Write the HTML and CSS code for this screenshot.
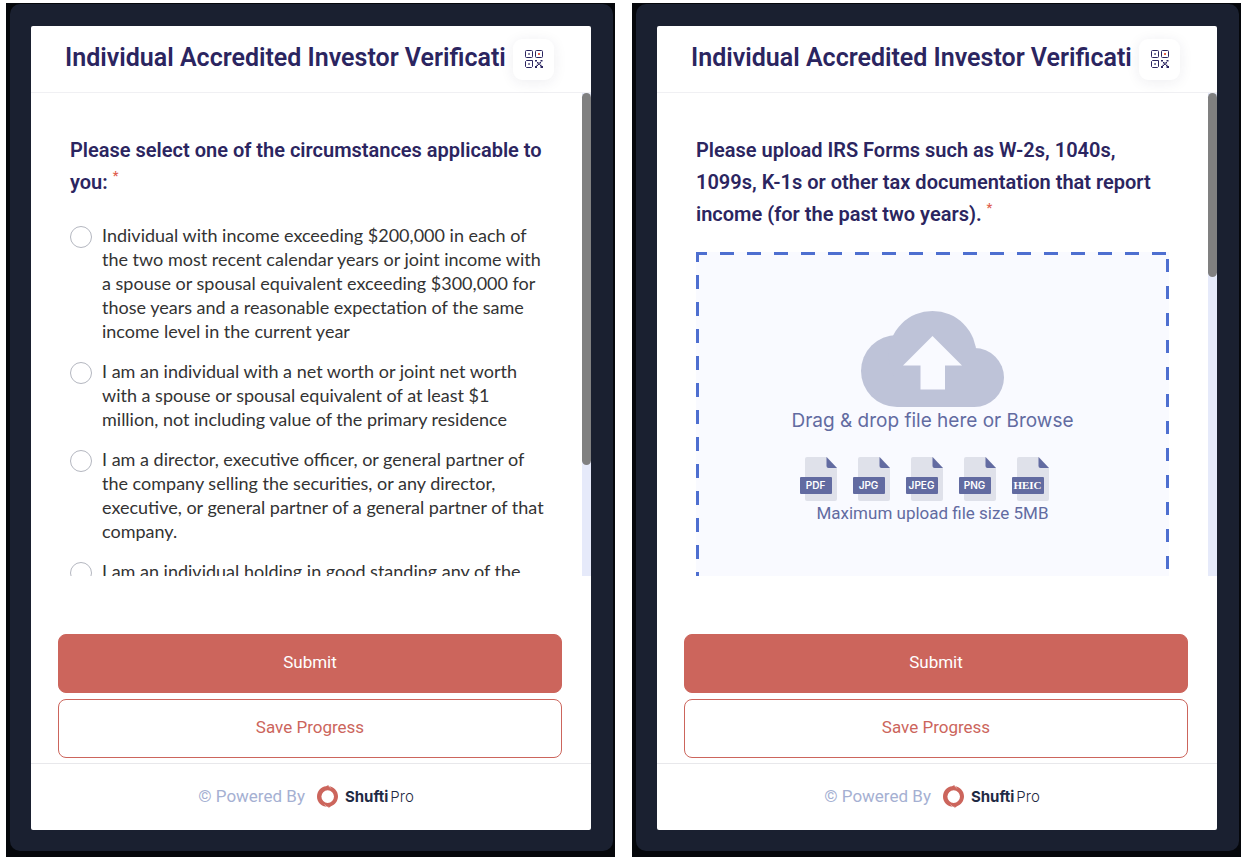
FILE: index.html
```html
<!DOCTYPE html>
<html lang="en">
<head>
<meta charset="utf-8">
<title>Individual Accredited Investor Verification</title>
<link rel="stylesheet" href="styles.css">
</head>
<body>
<svg class="defs" aria-hidden="true">
  <symbol id="qr" viewBox="0 0 18 18">
    <g fill="none" stroke="#2b2560" stroke-width="1">
      <rect x=".5" y=".5" width="7" height="7" rx="1"/>
      <rect x="10.5" y=".5" width="7" height="7" rx="1"/>
      <path d="M1.500 10.500H7.500V16.500L6.500 17.500H1.500L.5 16.500V11.500Z"/>
    </g>
    <path fill="#2b2560" d="M3.300 3.300h1.500v1.500h-1.500zM3.300 13.200h1.500v1.500h-1.500zM10 10h2v1.500h-2zM15.500 10h2v1.500h-2zM12 12h1.500v1.500H12zM14.500 12H16v1.500h-1.500zM13 13.500h1.800v1.500H13zM10 16h2v2h-2zM11.500 14.700H13v1.300h-1.500zM15.500 16h2.500v2h-2.500zM15 14.700h1.500V16H15z"/>
    <path fill="#e0604f" d="M13 3h2v2h-2z"/>
  </symbol>
  <symbol id="ring" viewBox="0 0 21 23">
    <path fill="#cc655c" fill-rule="evenodd" d="M11.500 0V1.200C17 1.500 21 6 21 11.300C21 16 18 20 14 21.200L11.500 23V21.800C5 22.500 0 17.500 0 11.800C0 6 4 1.500 9 1.200ZM10.700 5.300A6.300 6.300 0 1 0 10.700 17.900A6.300 6.300 0 1 0 10.700 5.300Z"/>
    <path fill="none" stroke="#fff" stroke-width=".4" d="M12 1L14 3.500M10 22L7.500 19.500"/>
  </symbol>
  <symbol id="file" viewBox="0 0 37 44">
    <path fill="#dfe1ea" d="M7 0H27L37 11V42a2 2 0 0 1-2 2H7a2 2 0 0 1-2-2V2a2 2 0 0 1 2-2Z"/>
    <path fill="#626ba1" d="M26.500 0L37 11H28.500a2 2 0 0 1-2-2Z"/>
  </symbol>
</svg>
<main class="stage">
  <section class="device">
    <div class="bezel">
      <form class="screen">
        <header class="top">
          <h1 class="title">Individual Accredited Investor Verification</h1>
          <button class="qr" type="button" aria-label="Show QR code"><svg width="18" height="18"><use href="#qr"/></svg></button>
        </header>
        <div class="pane">
          <div class="content" role="radiogroup" aria-labelledby="circumstances">
            <h2 class="question" id="circumstances">Please select one of the circumstances applicable to you: <span class="req">*</span></h2>
            <label class="option"><input class="radio" type="radio" name="c"><span>Individual with income exceeding $200,000 in each of<br>the two most recent calendar years or joint income with<br>a spouse or spousal equivalent exceeding $300,000 for<br>those years and a reasonable expectation of the same<br>income level in the current year</span></label>
            <label class="option"><input class="radio" type="radio" name="c"><span>I am an individual with a net worth or joint net worth<br>with a spouse or spousal equivalent of at least $1<br>million, not including value of the primary residence</span></label>
            <label class="option"><input class="radio" type="radio" name="c"><span>I am a director, executive officer, or general partner of<br>the company selling the securities, or any director,<br>executive, or general partner of a general partner of that<br>company.</span></label>
            <label class="option"><input class="radio" type="radio" name="c"><span>I am an individual holding in good standing any of the</span></label>
          </div>
          <div class="track"><div class="thumb thumb-long"></div></div>
        </div>
        <div class="actions">
          <button class="btn primary" type="submit">Submit</button>
          <button class="btn outline" type="button">Save Progress</button>
        </div>
        <footer class="foot"><span class="powered">© Powered By</span><svg class="ring" width="21" height="23" aria-hidden="true"><use href="#ring"/></svg><span class="brand"><b>Shufti</b><span class="pro">Pro</span></span></footer>
      </form>
    </div>
  </section>
  <section class="device">
    <div class="bezel">
      <form class="screen">
        <header class="top">
          <h1 class="title">Individual Accredited Investor Verification</h1>
          <button class="qr" type="button" aria-label="Show QR code"><svg width="18" height="18"><use href="#qr"/></svg></button>
        </header>
        <div class="pane">
          <div class="content">
            <h2 class="question">Please upload IRS Forms such as W-2s, 1040s, 1099s, K-1s or other tax documentation that report income (for the past two years). <span class="req">*</span></h2>
            <button class="drop" type="button">
              <svg class="cloud" width="144" height="97" viewBox="0 0 144 97" aria-hidden="true">
                <g fill="#bec3d8">
                  <circle cx="36" cy="60" r="36"/>
                  <circle cx="71.500" cy="44" r="44"/>
                  <circle cx="113.500" cy="66.500" r="29.500"/>
                  <path d="M36 50H113.500V96H36Z"/>
                </g>
                <path fill="#f9faff" d="M71.500 25L101 54.500H84V78.500H59.500V54.500H42Z"/>
              </svg>
              <span class="drag">Drag &amp; drop file here or Browse</span>
              <span class="types">
                <span class="type"><svg width="37" height="44"><use href="#file"/></svg><span class="tag">PDF</span></span>
                <span class="type"><svg width="37" height="44"><use href="#file"/></svg><span class="tag">JPG</span></span>
                <span class="type"><svg width="37" height="44"><use href="#file"/></svg><span class="tag">JPEG</span></span>
                <span class="type"><svg width="37" height="44"><use href="#file"/></svg><span class="tag">PNG</span></span>
                <span class="type"><svg width="37" height="44"><use href="#file"/></svg><span class="tag serif">HEIC</span></span>
              </span>
              <span class="max">Maximum upload file size 5MB</span>
            </button>
          </div>
          <div class="track"><div class="thumb thumb-short"></div></div>
        </div>
        <div class="actions">
          <button class="btn primary" type="submit">Submit</button>
          <button class="btn outline" type="button">Save Progress</button>
        </div>
        <footer class="foot"><span class="powered">© Powered By</span><svg class="ring" width="21" height="23" aria-hidden="true"><use href="#ring"/></svg><span class="brand"><b>Shufti</b><span class="pro">Pro</span></span></footer>
      </form>
    </div>
  </section>
</main>
</body>
</html>
```
FILE: styles.css
```css
* { box-sizing: border-box; }
body { margin: 0; background: #fff; font-family: Roboto, "Liberation Sans", sans-serif; }
button { font: inherit; cursor: pointer; }
.defs { position: absolute; width: 0; height: 0; }
.stage { display: flex; gap: 17px; padding: 3px 3px 7px 6px; height: 100vh; }
.device { flex: 1; min-width: 0; background: #05070b; padding: 1px 2px 6px 4px; }
.bezel { height: 100%; background: #1a2030; border-radius: 10px; padding: 22px 22px 21px 21px; }
.screen { display: flex; flex-direction: column; height: 100%; background: #fff; border-radius: 2px; }
.top { display: flex; align-items: center; height: 67px; flex: none; padding: 0 37px 0 34px; border-bottom: 1px solid #f0f0f3; }
.title { flex: 1; min-width: 0; margin: 0 7px 0 0; padding-bottom: 2px; overflow: hidden; white-space: nowrap; font-size: 25px; line-height: 36px; font-weight: 600; color: #2b2560; }
.qr { flex: none; display: grid; place-items: center; width: 41px; height: 41px; padding: 0; border: 0; border-radius: 9px; background: #fff; box-shadow: 0 2px 14px rgba(40, 40, 80, .08); }
.pane { display: flex; flex: 1; min-height: 0; }
.content { flex: 1; min-width: 0; padding: 41px 39px 0; overflow-y: auto; scrollbar-width: none; }
.track { flex: none; width: 9px; background: #e6eafa; }
.thumb { border-radius: 5px; background: #808080; }
.thumb-long { height: 77%; }
.thumb-short { height: 38%; }
.question { margin: 0 0 25px; font-size: 20px; line-height: 32px; font-weight: 600; color: #2b2560; }
.req { font-size: 13px; line-height: 1; font-weight: 500; vertical-align: 9px; color: #e0604f; }
.option { display: flex; gap: 10px; margin-bottom: 16px; font: 18px/24px Lato, sans-serif; color: #333; white-space: nowrap; }
.radio { appearance: none; flex: none; width: 22px; height: 22px; margin: 3px 0 0; border: 1px solid #b4b7c0; border-radius: 50%; background: #fff; }
.radio:checked { border: 6px solid #cc655c; }
.actions { flex: none; display: grid; gap: 6px; padding: 58px 29px 5px 27px; }
.btn { height: 59px; padding: 0 0 4px; border: 1px solid #cc655c; border-radius: 8px; font-size: 17px; }
.primary { background: #cc655c; color: #fff; }
.outline { background: #fff; color: #cc655c; }
.foot { flex: none; display: flex; align-items: center; justify-content: center; height: 67px; padding: 0 10px 2px 0; border-top: 1px solid #e8e8eb; }
.powered { font-size: 17px; color: #a5b0d2; }
.ring { margin: 0 7px 0 12px; }
.brand { font-size: 15px; color: #1f2a44; font-family: Inter, sans-serif; }
.pro { margin-left: 2px; font-weight: 300; }
.drop { display: flex; flex-direction: column; align-items: center; width: 100%; height: 420px; margin-top: -3px; padding: 59px 0 0; border: 0; color: #626ba1;
  background:
    repeating-linear-gradient(90deg, #4e6fd0 0 11px, transparent 11px 24px, #4e6fd0 24px 27px) 0 0 / 100% 3px no-repeat,
    repeating-linear-gradient(180deg, #4e6fd0 0 10px, transparent 10px 23px, #4e6fd0 23px 27px) 0 0 / 3px 100% no-repeat,
    repeating-linear-gradient(180deg, transparent 0 7px, #4e6fd0 7px 20px, transparent 20px 27px) 100% 0 / 3px 100% no-repeat,
    #f9faff; }
.drag { font: 19px/26px Inter, sans-serif; }
.types { display: flex; gap: 16px; margin: 23px 0 0; padding-right: 17px; }
.type { position: relative; width: 37px; height: 44px; }
.tag { position: absolute; left: 0; top: 20px; width: 32px; height: 17px; border-radius: 1px; background: #626ba1; color: #fff; font: 600 10px/17px Inter, sans-serif; text-align: center; }
.serif { font: 700 11px/17px "Liberation Serif", serif; }
.max { font-size: 17px; line-height: 24px; }
```
